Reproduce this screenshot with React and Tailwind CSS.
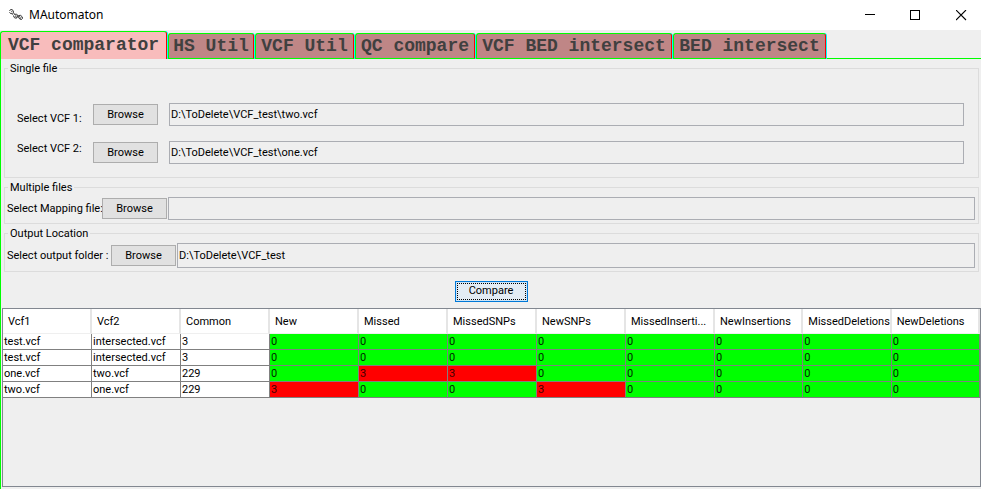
import { useState } from "react";

const TABS = [
  { name: "VCF comparator", width: "w-[167px]" },
  { name: "HS Util", width: "w-[86px]" },
  { name: "VCF Util", width: "w-[99px]" },
  { name: "QC compare", width: "w-[120px]" },
  { name: "VCF BED intersect", width: "w-[196px]" },
  { name: "BED intersect", width: "w-[153px]" },
];

const COLUMNS = [
  { label: "Vcf1", width: "w-[89px]" },
  { label: "Vcf2", width: "w-[89px]" },
  { label: "Common", width: "w-[89px]" },
  { label: "New", width: "w-[89px]" },
  { label: "Missed", width: "w-[89px]" },
  { label: "MissedSNPs", width: "w-[89px]" },
  { label: "NewSNPs", width: "w-[89px]" },
  { label: "MissedInserti...", width: "w-[89px]" },
  { label: "NewInsertions", width: "" },
  { label: "MissedDeletions", width: "" },
  { label: "NewDeletions", width: "" },
];

const ROWS = [
  ["test.vcf", "intersected.vcf", 3, 0, 0, 0, 0, 0, 0, 0, 0],
  ["test.vcf", "intersected.vcf", 3, 0, 0, 0, 0, 0, 0, 0, 0],
  ["one.vcf", "two.vcf", 229, 0, 3, 3, 0, 0, 0, 0, 0],
  ["two.vcf", "one.vcf", 229, 3, 0, 0, 3, 0, 0, 0, 0],
];

function cellColour(value, column) {
  if (column < 3) return "bg-white text-black";
  return value === 0 ? "bg-[#00ff00] text-[#002800]" : "bg-[#ff0000] text-[#400000]";
}

function HelixIcon() {
  return (
    <svg width="14" height="12" viewBox="0 0 14 12" fill="none" stroke="#222" strokeWidth="0.9" aria-hidden="true">
      <path d="M0.5 2 1.5 0.6h1.5l1.2 1 .3 2 .8 1.4" />
      <path d="M0.5 3.2l1 1.3 1.5.2 1 .8" />
      <path d="M2 3l1.5-1M3.3 4.4l1-.8" strokeWidth="0.7" />
      <path d="M4.5 6.5 5.5 5.4l1.8-.2 1.4.8.8 2.2 1.2 1.8 1.8.5 1-1.2" />
      <path d="M4.5 7l1 1.8 2 .4 1-1.4 1.2-1.3 2-.1 1.5 1.4.3 1.5" />
      <path d="M6 8l1.2-2M7.5 8.7l.8-2M10 8.6l.8-1.6M11.5 9.8l.6-2" strokeWidth="0.7" />
    </svg>
  );
}

function TitleBar() {
  const control = "flex h-[30px] w-10 items-center justify-center";
  return (
    <header className="flex h-[30px] items-center bg-white">
      <div className="flex items-center gap-[6px] pl-[9px]">
        <HelixIcon />
        <h1 className="font-['Noto_Sans',sans-serif] text-[12px] leading-4">MAutomaton</h1>
      </div>
      <div className="ml-auto flex gap-[6px]">
        <button aria-label="Minimize" className={control}>
          <svg width="11" height="11" shapeRendering="crispEdges"><path d="M1 4.5H11" stroke="#000" /></svg>
        </button>
        <button aria-label="Maximize" className={control}>
          <svg width="11" height="11" shapeRendering="crispEdges"><path d="M.5 .5H9.5V9.5H.5Z" fill="none" stroke="#000" /></svg>
        </button>
        <button aria-label="Close" className={control}>
          <svg width="11" height="11"><path d="M0 0 10 10M10 0 0 10" stroke="#000" strokeWidth="1.1" /></svg>
        </button>
      </div>
    </header>
  );
}

function Tab({ tab, selected, onSelect }) {
  const look = selected
    ? "h-[28px] bg-[#f8bcbc] pb-px"
    : "h-[26px] border-b border-b-[#00ff00] bg-[#bf8686]";
  return (
    <button
      role="tab"
      aria-selected={selected}
      onClick={onSelect}
      className={`shrink-0 self-end whitespace-nowrap rounded-t-[3px] border-t border-r border-l border-t-[#00ff00] border-r-[#ff0000] border-l-[#00ff00] shadow-[1px_0_0_#00ffff] text-center font-['Liberation_Mono','Courier_New',monospace] text-[18px] leading-6 font-bold text-[#404040] ${tab.width} ${look}`}
    >
      {tab.name}
    </button>
  );
}

function Group({ title, className, children }) {
  return (
    <fieldset className="min-w-0 border border-[#dcdcdc]">
      <legend className="ml-[3px] px-[2px] leading-[13px]">{title}</legend>
      <div className={className}>{children}</div>
    </fieldset>
  );
}

function BrowseButton() {
  return (
    <button className="h-[21px] w-[65px] shrink-0 border border-[#adadad] bg-[#e1e1e1] leading-[15px]">Browse</button>
  );
}

function PathField({ id, value, height = "h-[23px]" }) {
  return (
    <input
      id={id}
      type="text"
      readOnly
      defaultValue={value}
      className={`min-w-0 flex-1 border border-[#abadb3] bg-[#efefef] px-px outline-none ${height}`}
    />
  );
}

function ResultTable() {
  return (
    <div className="mb-[2px] ml-px flex-1 border border-[#828790]">
      <table className="w-full table-fixed border-separate border-spacing-0 text-left">
        <thead>
          <tr className="h-[25px] bg-white">
            {COLUMNS.map(({ label, width }) => (
              <th
                key={label}
                className={`whitespace-nowrap border-r-2 border-b border-r-[#e5e5e5] border-b-[#efefef] pt-px pl-[5px] leading-4 font-normal ${width}`}
              >
                {label}
              </th>
            ))}
          </tr>
        </thead>
        <tbody>
          {ROWS.map((row, r) => (
            <tr key={r} className="h-4">
              {row.map((value, c) => (
                <td
                  key={c}
                  className={`truncate border-r border-b border-[#808080] pl-px leading-[15px] ${cellColour(value, c)}`}
                >
                  {value}
                </td>
              ))}
            </tr>
          ))}
        </tbody>
      </table>
    </div>
  );
}

export default function App() {
  const [active, setActive] = useState(0);
  return (
    <div className="flex min-h-screen flex-col bg-[#efefef] font-['Roboto','Tahoma',sans-serif] text-[11px] text-black">
      <TitleBar />
      <div role="tablist" className="flex h-[29px] gap-px overflow-hidden pt-px">
        {TABS.map((tab, i) => (
          <Tab key={tab.name} tab={tab} selected={i === active} onSelect={() => setActive(i)} />
        ))}
        <div className="flex-1 self-end border-b border-[#00ff00]" />
      </div>
      <main className="flex flex-1 flex-col border-l border-[#00ff00] pt-[3px]">
        <div className="flex flex-col gap-[3px] pr-[2px] pl-[3px]">
          <Group title="Single file" className="pb-[13px]">
            <div className="flex flex-col gap-[15px] pt-[28px] pr-[14px] pl-3">
              <div className="flex items-center">
                <label htmlFor="vcf1" className="w-[76px] self-end leading-[15px]">Select VCF 1:</label>
                <BrowseButton />
                <div className="flex flex-1 pl-[11px]"><PathField id="vcf1" value="D:\ToDelete\VCF_test\two.vcf" /></div>
              </div>
              <div className="flex items-center">
                <label htmlFor="vcf2" className="w-[76px] self-start leading-[15px]">Select VCF 2:</label>
                <BrowseButton />
                <div className="flex flex-1 pl-[11px]"><PathField id="vcf2" value="D:\ToDelete\VCF_test\one.vcf" /></div>
              </div>
            </div>
          </Group>
          <Group title="Multiple files" className="px-[2px] pb-[3px]">
            <div className="flex items-center gap-px pt-[3px] pr-px">
              <label htmlFor="mapping" className="w-[94px] whitespace-nowrap leading-[15px]">Select Mapping file:</label>
              <BrowseButton />
              <PathField id="mapping" value="" />
            </div>
          </Group>
          <Group title="Output Location" className="px-[2px] pb-[3px]">
            <div className="flex items-center gap-px pt-[3px] pr-px">
              <label htmlFor="output" className="w-[103px] whitespace-nowrap leading-[15px]">Select output folder :</label>
              <BrowseButton />
              <PathField id="output" value="D:\ToDelete\VCF_test" height="h-[25px]" />
            </div>
          </Group>
        </div>
        <div className="flex justify-center pt-[9px] pb-[6px]">
          <button className="h-[21px] w-[73px] border border-[#0078d7] bg-[#cce4f7] p-px">
            <span className="flex h-full items-center justify-center border border-dotted border-black bg-[#e3ecf4]">Compare</span>
          </button>
        </div>
        <ResultTable />
      </main>
    </div>
  );
}
